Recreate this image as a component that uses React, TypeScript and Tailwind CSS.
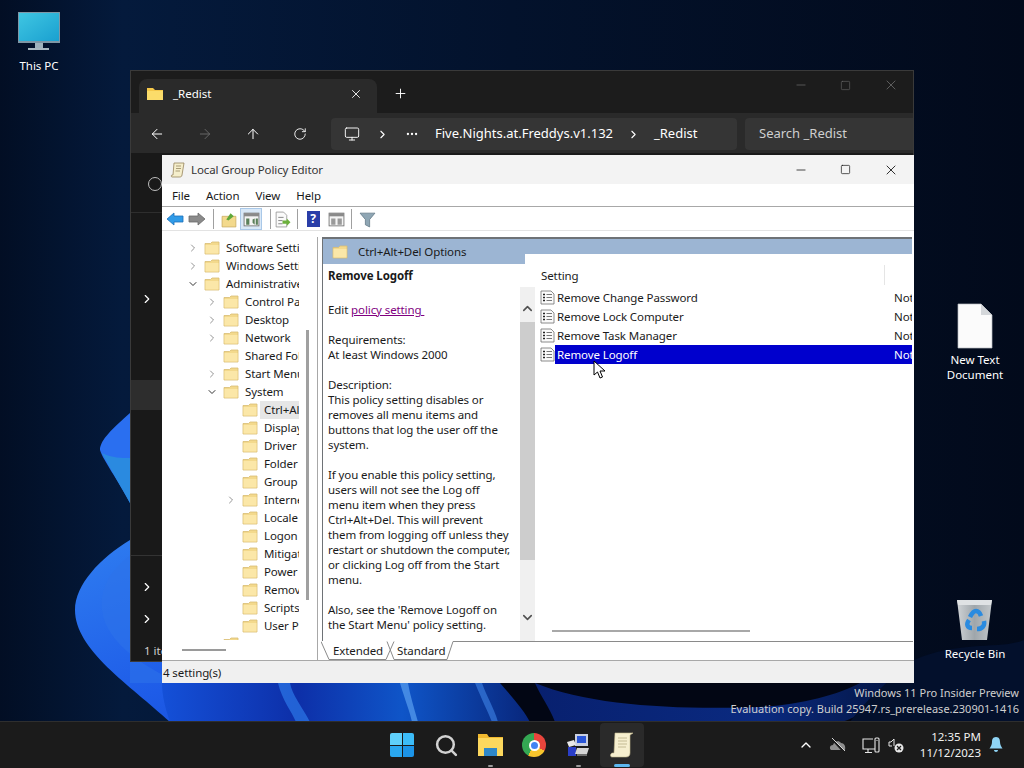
import {
  ArrowLeft,
  ArrowRight,
  ArrowUp,
  ChevronDown,
  ChevronRight,
  ChevronUp,
  Ellipsis,
  Minus,
  Monitor,
  Plus,
  RotateCw,
  Search,
  Square,
  X,
} from "lucide-react";

const font = { fontFamily: '"Noto Sans", "Liberation Sans", sans-serif' };

function Wallpaper() {
  return (
    <svg className="absolute inset-0" width="1024" height="768" viewBox="0 0 1024 768">
      <defs>
        <linearGradient id="bg" x1="0" y1="0" x2="1" y2="0">
          <stop offset="0" stopColor="#020e24" />
          <stop offset="0.12" stopColor="#041a3c" />
          <stop offset="0.5" stopColor="#03122c" />
          <stop offset="1" stopColor="#020a1b" />
        </linearGradient>
        <linearGradient id="petal" x1="0" y1="0" x2="1" y2="1">
          <stop offset="0" stopColor="#2f7df0" />
          <stop offset="0.5" stopColor="#1e5ce8" />
          <stop offset="1" stopColor="#0f3fc4" />
        </linearGradient>
        <linearGradient id="strip" x1="0" y1="0" x2="1" y2="0">
          <stop offset="0" stopColor="#1450d8" />
          <stop offset="0.35" stopColor="#0d2fa8" />
          <stop offset="0.62" stopColor="#0f55c8" />
          <stop offset="1" stopColor="#071f70" />
        </linearGradient>
        <linearGradient id="arc" x1="0" y1="0" x2="1" y2="0">
          <stop offset="0" stopColor="#08206f" />
          <stop offset="0.6" stopColor="#0a2a80" />
          <stop offset="1" stopColor="#03123a" />
        </linearGradient>
      </defs>
      <rect width="1024" height="768" fill="url(#bg)" />
      <path d="M130 413C113 428 100 440 100 450C103 460 118 480 130 503Z" fill="#2a6ff0" />
      <path d="M102 453C112 458 122 458 130 458V503C120 485 108 465 102 453Z" fill="#2a8ae0" />
      <path d="M130 540C100 558 75 585 75 610C75 650 130 685 170 722H560V540Z" fill="url(#petal)" />
      <path d="M130 555C108 572 100 590 102 610C106 645 150 670 180 683H130Z" fill="#2e72ea" opacity="0.55" />
      <path d="M162 683H540C560 700 545 712 530 722H170C165 708 162 695 162 683Z" fill="url(#strip)" />
      <path d="M278 683C282 700 292 712 296 722H310C303 708 292 695 290 683Z" fill="#2c78e8" opacity="0.7" />
      <path d="M400 683C405 700 410 712 412 722H418C414 708 410 695 408 683Z" fill="#5aa0f0" opacity="0.7" />
      <path d="M475 683C482 700 488 712 492 722H498C494 708 486 695 482 683Z" fill="#3f86e8" opacity="0.6" />
      <path d="M500 683C515 700 525 712 530 722H860C880 705 900 695 914 683Z" fill="#020614" />
      <path d="M535 683C590 706 680 710 760 707C800 705 840 694 860 683L914 683C880 702 850 722 840 722H555C550 708 540 695 535 683Z" fill="url(#arc)" />
      <path d="M914 660C960 640 1000 650 1024 640V722H850C870 695 890 680 914 660Z" fill="#03102c" />
    </svg>
  );
}

function MonitorIcon() {
  return (
    <svg width="44" height="40" viewBox="0 0 44 40">
      <defs>
        <linearGradient id="scr" x1="0" y1="0" x2="1" y2="1">
          <stop offset="0" stopColor="#3fc6e2" />
          <stop offset="1" stopColor="#1aa0d0" />
        </linearGradient>
      </defs>
      <rect x="1" y="0" width="42" height="31" fill="#7f97a6" />
      <rect x="2" y="1" width="40" height="28" fill="url(#scr)" />
      <rect x="18" y="31" width="8" height="5" fill="#9fb2bd" />
      <rect x="11" y="36" width="21" height="2" fill="#a9b8c1" />
    </svg>
  );
}

function DocIcon() {
  return (
    <svg width="36" height="46" viewBox="0 0 36 46">
      <path d="M1 1H24L35 12V45H1Z" fill="#fbfbfb" stroke="#b8bcc2" strokeWidth="0.7" />
      <path d="M24 1V12H35Z" fill="#d4d7da" />
    </svg>
  );
}

function BinIcon() {
  return (
    <svg width="38" height="44" viewBox="0 0 38 44">
      <defs>
        <linearGradient id="bin" x1="0" y1="0" x2="1" y2="0">
          <stop offset="0" stopColor="#cfd3d6" />
          <stop offset="0.5" stopColor="#9fa6ab" />
          <stop offset="1" stopColor="#c2c7ca" />
        </linearGradient>
      </defs>
      <path d="M1 2H36L31 42H6Z" fill="url(#bin)" />
      <path d="M1 2H36L35 7H2Z" fill="#dfe2e4" />
      <g fill="none" stroke="#2a8be0" strokeWidth="4.5">
        <path d="M14 19C16 15 18 13 20 13C22 13 24 15 25 18" />
        <path d="M13 22C10 26 11 30 16 30" />
        <path d="M21 31C26 31 29 28 28 23" />
      </g>
    </svg>
  );
}

function DesktopIcon({ className, icon, label, gap }: { className: string; icon: React.ReactNode; label: string; gap: string }) {
  return (
    <div className={`absolute flex flex-col items-center text-center text-[11.5px] leading-[15px] text-white ${className}`}>
      {icon}
      <span className={gap}>{label}</span>
    </div>
  );
}

function Folder({ size = 16 }: { size?: number }) {
  return (
    <svg width={size} height={size} viewBox="0 0 16 16" className="shrink-0">
      <path d="M1 3.5H6.5L8 2H15V14H1Z" fill="#f3d98c" stroke="#d8bd74" strokeWidth="0.8" />
      <path d="M1.5 5H14.5V13.5H1.5Z" fill="#fbe7a8" />
    </svg>
  );
}

function ExplorerWindow() {
  const sidebarArrows = [
    "absolute left-[9px] top-[139px]",
    "absolute left-[9px] top-[427px]",
    "absolute left-[9px] top-[459px]",
  ];
  return (
    <div className="absolute left-[130px] top-[70px] flex h-[592px] w-[784px] flex-col overflow-hidden border border-[#3a3a3a] bg-[#191919] text-white">
      <div className="flex h-[42px] shrink-0 items-end bg-[#1c1c1c] pl-[8px]">
        <div className="flex h-[34px] w-[238px] items-center rounded-t-lg bg-[#2a2a2a] pb-[4px] pl-[7px] text-[11.5px]">
          <svg width="18" height="16" viewBox="0 0 18 16">
            <path d="M1 2H7L9 4H17V14H1Z" fill="#f5c84a" />
            <path d="M1 5H17V14H1Z" fill="#fbdc6a" />
          </svg>
          <span className="ml-[9px]">_Redist</span>
          <X className="ml-auto mr-[14px]" size={14} strokeWidth={1.5} />
        </div>
        <Plus className="mb-[12px] ml-[16px]" size={15} strokeWidth={1.5} />
        <div className="mb-[20px] ml-auto mr-[14px] flex items-center gap-[32px] text-[#6f6f6f]">
          <Minus size={14} strokeWidth={1.2} />
          <Square size={11} strokeWidth={1.2} />
          <X size={16} strokeWidth={1.2} />
        </div>
      </div>
      <div className="flex h-[40px] shrink-0 items-center bg-[#2a2a2a] pl-[18px] pt-[2px] text-[13px]">
        <ArrowLeft size={16} strokeWidth={1.5} />
        <ArrowRight className="ml-[32px] text-[#666666]" size={16} strokeWidth={1.5} />
        <ArrowUp className="ml-[32px]" size={16} strokeWidth={1.5} />
        <RotateCw className="ml-[32px]" size={14} strokeWidth={1.5} />
        <div className="ml-[24px] flex h-[32px] w-[406px] items-center rounded bg-[#353535] pl-[13px]">
          <Monitor size={16} strokeWidth={1.4} />
          <ChevronRight className="ml-[16px]" size={13} />
          <Ellipsis className="ml-[16px]" size={14} />
          <span className="ml-[16px]">Five.Nights.at.Freddys.v1.132</span>
          <ChevronRight className="ml-[14px]" size={13} />
          <span className="ml-[14px]">_Redist</span>
        </div>
        <div className="ml-[8px] flex h-[32px] flex-1 items-center rounded-l bg-[#353535] pl-[14px] text-[#cfcfcf]">
          Search _Redist
        </div>
      </div>
      <div className="relative flex-1">
        <div className="absolute left-[17px] top-[24px] h-[14px] w-[14px] rounded-full border border-[#bdbdbd]" />
        <div className="absolute left-0 top-[59px] h-px w-full bg-[#2e2e2e]" />
        <div className="absolute left-0 top-[227px] h-[30px] w-full bg-[#2d2d2d]" />
        <div className="absolute left-0 top-[402px] h-px w-full bg-[#333333]" />
        {sidebarArrows.map((c) => (
          <ChevronRight key={c} className={c} size={14} strokeWidth={2} />
        ))}
        <span className="absolute left-[13px] top-[489px] text-[11.5px] text-[#d0d0d0]">1 item</span>
      </div>
    </div>
  );
}

function Btn({ children, active }: { children: React.ReactNode; active?: boolean }) {
  return (
    <div className={`flex h-[22px] w-[22px] shrink-0 items-center justify-center ${active ? "border border-[#a9c8e8] bg-[#d9e8f7]" : ""}`}>
      {children}
    </div>
  );
}

function Sep({ className }: { className: string }) {
  return <div className={`h-[20px] w-px bg-[#a0a0a0] ${className}`} />;
}

function GpToolbar() {
  return (
    <div className="flex h-[24px] shrink-0 items-center border-b border-[#e3e3e3] pl-[2px] pt-[1px]">
      <Btn>
        <svg width="18" height="14" viewBox="0 0 18 14">
          <path d="M1 7L8 1V4H17V10H8V13Z" fill="#2f9be8" stroke="#1c6fb8" strokeWidth="0.8" />
        </svg>
      </Btn>
      <Btn>
        <svg width="18" height="14" viewBox="0 0 18 14">
          <path d="M17 7L10 1V4H1V10H10V13Z" fill="#8a8a8a" stroke="#6a6a6a" strokeWidth="0.8" />
        </svg>
      </Btn>
      <Sep className="ml-[5px] mr-[4px]" />
      <Btn>
        <svg width="17" height="17" viewBox="0 0 16 16">
          <path d="M1 5H14V15H1Z" fill="#f3d98c" stroke="#c8a85c" strokeWidth="0.7" />
          <path d="M5 8L9 2L12 5L7 9Z" fill="#5fa83a" />
        </svg>
      </Btn>
      <Btn active>
        <svg width="17" height="15" viewBox="0 0 16 14">
          <rect x="1" y="1" width="14" height="12" fill="#f4f4f4" stroke="#707070" strokeWidth="0.8" />
          <rect x="1" y="1" width="14" height="3" fill="#8a8a8a" />
          <path d="M3 6H6V12H3ZM9 7L11 6V12L9 10ZM12 6H14V12H12Z" fill="#5a7f5a" />
        </svg>
      </Btn>
      <Sep className="ml-[8px]" />
      <Btn>
        <svg width="17" height="17" viewBox="0 0 16 16">
          <path d="M2 1H9L12 4V15H2Z" fill="#fafafa" stroke="#8a8a8a" strokeWidth="0.7" />
          <path d="M4 6H9M4 9H8M4 12H8" stroke="#777777" strokeWidth="0.8" />
          <path d="M8 9H12V7L15.5 10.5L12 14V12H8Z" fill="#6cb03c" />
        </svg>
      </Btn>
      <Sep className="ml-[4px] mr-[4px]" />
      <Btn>
        <div className="flex h-[16px] w-[13px] items-center justify-center bg-[#2a3ea8] text-[12px] font-bold leading-none text-white">?</div>
      </Btn>
      <div className="w-px shrink-0" />
      <Btn>
        <svg width="17" height="15" viewBox="0 0 16 14">
          <rect x="1" y="1" width="14" height="12" fill="#f4f4f4" stroke="#707070" strokeWidth="0.8" />
          <rect x="1" y="1" width="14" height="3" fill="#8a8a8a" />
          <path d="M3 6H7V12H3ZM9 6H13V12H9Z" fill="#9a9a9a" />
        </svg>
      </Btn>
      <Sep className="ml-[4px] mr-[4px]" />
      <Btn>
        <svg width="17" height="17" viewBox="0 0 16 16">
          <path d="M1 2H15L10 8V15L6 13V8Z" fill="#8fa6b4" stroke="#5f7683" strokeWidth="0.7" />
        </svg>
      </Btn>
    </div>
  );
}

const treeRows: { label: string; level: number; arrow?: "right" | "down"; selected?: boolean }[] = [
  { label: "Software Settings", level: 0, arrow: "right" },
  { label: "Windows Settings", level: 0, arrow: "right" },
  { label: "Administrative Templates", level: 0, arrow: "down" },
  { label: "Control Panel", level: 1, arrow: "right" },
  { label: "Desktop", level: 1, arrow: "right" },
  { label: "Network", level: 1, arrow: "right" },
  { label: "Shared Folders", level: 1 },
  { label: "Start Menu and Taskbar", level: 1, arrow: "right" },
  { label: "System", level: 1, arrow: "down" },
  { label: "Ctrl+Alt+Del Options", level: 2, selected: true },
  { label: "Display", level: 2 },
  { label: "Driver Installation", level: 2 },
  { label: "Folder Redirection", level: 2 },
  { label: "Group Policy", level: 2 },
  { label: "Internet Communication", level: 2, arrow: "right" },
  { label: "Locale Services", level: 2 },
  { label: "Logon", level: 2 },
  { label: "Mitigation Options", level: 2 },
  { label: "Power Management", level: 2 },
  { label: "Removable Storage", level: 2 },
  { label: "Scripts", level: 2 },
  { label: "User Profiles", level: 2 },
  { label: "Windows Components", level: 1 },
];

const indent = ["pl-[23px]", "pl-[42px]", "pl-[61px]"];

function Tree() {
  return (
    <div className="relative flex h-[423px] w-[155px] shrink-0 flex-col border-r border-[#a8a8a8]">
      <div className="h-[403px] w-[136px] flex-none overflow-hidden pt-[2px]">
        {treeRows.map((r) => (
          <div key={r.label} className={`flex h-[18px] items-center whitespace-nowrap ${indent[r.level]}`}>
            <span className="flex w-[13px] shrink-0 justify-center text-[#707070]">
              {r.arrow === "right" && <ChevronRight size={12} strokeWidth={1.5} />}
              {r.arrow === "down" && <ChevronDown size={12} strokeWidth={2} className="text-[#333333]" />}
            </span>
            <span className="ml-[5px]"><Folder /></span>
            <span className={`ml-[2px] h-[18px] pl-[4px] leading-[18px] ${r.selected ? "bg-[#e6e6e6]" : ""}`}>{r.label}</span>
          </div>
        ))}
      </div>
      <div className="absolute right-[8px] top-[93px] h-[270px] w-[3px] bg-[#a0a0a0]" />
      <div className="absolute bottom-[9px] left-[19px] h-[2px] w-[44px] bg-[#9a9a9a]" />
    </div>
  );
}

const settings = ["Remove Change Password", "Remove Lock Computer", "Remove Task Manager", "Remove Logoff"];

function SettingIcon() {
  return (
    <svg width="15" height="15" viewBox="0 0 15 15" className="shrink-0">
      <path d="M1 1H11L14 4V14H1Z" fill="#fafafa" stroke="#707070" strokeWidth="0.8" />
      <path d="M3 4.5H5M3 7.5H5M3 10.5H5" stroke="#222222" strokeWidth="1.3" />
      <path d="M6.5 4.5H12M6.5 7.5H12M6.5 10.5H12" stroke="#555555" strokeWidth="0.8" />
    </svg>
  );
}

function Description() {
  return (
    <div className="flex w-[202px] shrink-0 flex-col">
      <div className="flex h-[25px] shrink-0 items-center bg-[#9cb5d3] pl-[9px]">
        <Folder />
        <span className="ml-[10px]">Ctrl+Alt+Del Options</span>
      </div>
      <div className="pl-[5px] pt-[4px] leading-[15px]">
        <p className="font-bold">Remove Logoff</p>
        <p className="mt-[19px]">
          Edit <span className="whitespace-pre text-[#800080] underline">policy setting </span>
        </p>
        <p className="mt-[15px]">Requirements:</p>
        <p>At least Windows 2000</p>
        <p className="mt-[15px]">Description:</p>
        <p>This policy setting disables or</p>
        <p>removes all menu items and</p>
        <p>buttons that log the user off the</p>
        <p>system.</p>
        <p className="mt-[15px]">If you enable this policy setting,</p>
        <p>users will not see the Log off</p>
        <p>menu item when they press</p>
        <p>Ctrl+Alt+Del. This will prevent</p>
        <p>them from logging off unless they</p>
        <p>restart or shutdown the computer,</p>
        <p>or clicking Log off from the Start</p>
        <p>menu.</p>
        <p className="mt-[15px]">Also, see the 'Remove Logoff on</p>
        <p>the Start Menu' policy setting.</p>
      </div>
    </div>
  );
}

function SettingsList() {
  return (
    <div className="flex min-w-0 flex-1 flex-col">
      <div className="h-[15px] shrink-0 bg-[#9cb5d3]" />
      <div className="flex h-[387px] flex-col rounded-tl-[10px] bg-white">
        <div className="relative h-[33px] shrink-0 pl-[16px] pt-[14px] leading-[15px]">
          Setting
          <div className="absolute left-[359px] top-[11px] h-[20px] w-px bg-[#e5e5e5]" />
        </div>
        <div className="flex min-h-0 flex-1">
          <div className="-ml-[5px] flex h-[354px] w-[15px] shrink-0 flex-col items-center bg-[#f0f0f0]">
            <ChevronUp className="mt-[14px] text-[#505050]" size={15} strokeWidth={2.5} />
            <div className="mt-[6px] h-[238px] w-full bg-[#cdcdcd]" />
            <ChevronDown className="mt-[50px] text-[#505050]" size={15} strokeWidth={2.5} />
          </div>
          <div className="relative min-w-0 flex-1 pl-[5px] pt-[1px]">
            {settings.map((s, i) => (
              <div key={s} className="flex h-[19px] items-center whitespace-nowrap">
                <SettingIcon />
                <div className={`flex h-[19px] flex-1 items-center justify-between pl-[2px] ${i === 3 ? "bg-[#0000cd] text-white" : ""}`}>
                  <span>{s}</span>
                  <span className="w-[18px] overflow-hidden">Not configured</span>
                </div>
              </div>
            ))}
            <div className="absolute left-[17px] top-[343px] h-[2px] w-[198px] bg-[#a8a8a8]" />
          </div>
        </div>
      </div>
    </div>
  );
}

function Tabs() {
  return (
    <div className="relative flex h-[19px] items-center pl-[11px] leading-[17px]">
      <svg className="absolute -left-px top-0" width="592" height="19" viewBox="0 0 592 19">
        <path d="M0 0.5L8 18.5H65L73 0.5M66 0.5L73 18.5H126L132 0.5H592" fill="none" stroke="#8a8a8a" />
      </svg>
      <span className="relative">Extended</span>
      <span className="relative ml-[14px]">Standard</span>
    </div>
  );
}

function GpEditor() {
  return (
    <div style={font} className="absolute left-[162px] top-[155px] flex h-[528px] w-[752px] flex-col bg-white text-[11.5px] tracking-[-0.1px] text-[#1a1a1a]">
      <div className="flex h-[29px] shrink-0 items-center bg-[#f3f3f3] pl-[8px]">
        <svg width="16" height="16" viewBox="0 0 16 16">
          <path d="M4 1H14L12 13C12 15 10 15 9 15H2C1 15 1 13 2 13H3Z" fill="#f5eecb" stroke="#96835a" strokeWidth="0.8" />
          <path d="M6 4H11M6 6.5H11M5.5 9H10" stroke="#8a7a55" strokeWidth="0.7" />
        </svg>
        <span className="ml-[5px] text-[#333333]">Local Group Policy Editor</span>
        <div className="ml-auto mr-[15px] flex items-center gap-[32px] text-[#111111]">
          <Minus size={14} strokeWidth={1.3} />
          <Square size={11} strokeWidth={1.5} />
          <X size={16} strokeWidth={1.3} />
        </div>
      </div>
      <div className="flex h-[23px] shrink-0 items-center gap-[16px] border-b border-[#a8a8a8] pl-[10px] pt-[1px]">
        <span>File</span>
        <span>Action</span>
        <span>View</span>
        <span>Help</span>
      </div>
      <GpToolbar />
      <div className="flex h-[6px] shrink-0" />
      <div className="flex min-h-0 flex-1">
        <div className="ml-px flex flex-col">
          <Tree />
        </div>
        <div className="ml-[4px] mr-[2px] flex min-w-0 flex-1 flex-col">
          <div className="flex h-[404px] shrink-0 border-l border-t-2 border-[#6e7276]">
            <Description />
            <SettingsList />
          </div>
          <Tabs />
        </div>
      </div>
      <div className="flex h-[23px] shrink-0 items-center border-t border-[#a8a8a8] bg-[#f0f0f0] pl-[1px] pt-[1px]">
        4 setting(s)
      </div>
    </div>
  );
}

function Taskbar() {
  return (
    <div className="absolute bottom-0 left-0 flex h-[47px] w-[1024px] items-center border-t border-[#2e2e2e] bg-[#1b1b1b] text-white">
      <div className="ml-[380px] flex items-center">
        <div className="flex h-[44px] w-[44px] items-center justify-center">
          <div className="grid h-[24px] w-[24px] grid-cols-2 gap-[1px]">
            <div className="rounded-tl-[2px] bg-[#5fd0fb]" />
            <div className="rounded-tr-[2px] bg-[#3cbcf8]" />
            <div className="rounded-bl-[2px] bg-[#2aa8f0]" />
            <div className="rounded-br-[2px] bg-[#1c94e8]" />
          </div>
        </div>
        <div className="flex h-[44px] w-[44px] items-center justify-center">
          <Search className="text-[#d2d2d2]" size={25} strokeWidth={2.4} />
        </div>
        <div className="relative flex h-[44px] w-[44px] items-center justify-center">
          <svg width="25" height="24" viewBox="0 0 25 24">
            <path d="M0 1H9L11 4H25V22H0Z" fill="#f1b92f" />
            <path d="M0 5H25V23H0Z" fill="#fcd85e" />
            <path d="M6 15H19V23H6Z" fill="#2e87c8" />
          </svg>
          <div className="absolute bottom-0 h-[2px] w-[5px] rounded bg-[#9a9a9a]" />
        </div>
        <div className="flex h-[44px] w-[44px] items-center justify-center">
          <div className="flex h-[24px] w-[24px] items-center justify-center rounded-full bg-[conic-gradient(#e8453c_0_120deg,#f7c52d_120deg_210deg,#34a853_210deg_360deg)]">
            <div className="h-[11px] w-[11px] rounded-full border-2 border-white bg-[#4285f4]" />
          </div>
        </div>
        <div className="relative flex h-[44px] w-[44px] items-center justify-center">
          <svg width="24" height="24" viewBox="0 0 24 24">
            <rect x="9" y="1" width="13" height="12" fill="#c9cfe0" />
            <rect x="11" y="3" width="9" height="7" fill="#2a56d8" />
            <path d="M1 9L8 7L10 12L3 14Z" fill="#e8e8e8" />
            <rect x="2" y="14" width="8" height="9" fill="#2a3ec8" />
            <path d="M11 15H23L21 21H9Z" fill="#d5d5d5" />
            <path d="M11 22H21" stroke="#8a8a8a" strokeWidth="1.5" />
          </svg>
          <div className="absolute bottom-0 h-[2px] w-[5px] rounded bg-[#9a9a9a]" />
        </div>
        <div className="relative flex h-[44px] w-[44px] items-center justify-center rounded bg-[#2a2a2a]">
          <svg width="24" height="26" viewBox="0 0 24 26">
            <path d="M5 1H23L20 3V21C20 24 18 25 16 25H2C0 25 0 22 2 21H4Z" fill="#f6efcf" stroke="#c4b98e" strokeWidth="0.6" />
            <path d="M8 6H17M8 9H17M8 12H17M8 15H16" stroke="#b9ae85" strokeWidth="0.8" />
          </svg>
          <div className="absolute bottom-0 h-[3px] w-[16px] rounded bg-[#5cb8f0]" />
        </div>
      </div>
      <ChevronUp className="ml-[154px]" size={16} strokeWidth={2} />
      <svg className="ml-[15px]" width="18" height="16" viewBox="0 0 18 16">
        <path d="M2 13C0 11 1 8 4 8C5 4 10 3 12 6C15 6 17 9 16 13Z" fill="#8e8e8e" />
        <path d="M3 2L15 15" stroke="#1b1b1b" strokeWidth="2" />
        <path d="M3 1L16 14" stroke="#d5d5d5" strokeWidth="1" />
      </svg>
      <svg className="ml-[15px]" width="18" height="17" viewBox="0 0 18 17" fill="none" stroke="#e6e6e6" strokeWidth="1.1">
        <path d="M11 2H1V12H13" />
        <path d="M6 12V15M3 15.5H10" />
        <rect x="13" y="1" width="4" height="14" rx="1" />
        <path d="M14.5 3.5H15.5" />
      </svg>
      <svg className="ml-[8px]" width="16" height="16" viewBox="0 0 16 16">
        <path d="M1 5H3L6 2V9" fill="none" stroke="#e6e6e6" strokeWidth="1" />
        <path d="M1 5V9H4" fill="none" stroke="#e6e6e6" strokeWidth="1" />
        <circle cx="11" cy="11" r="4.5" fill="#e6e6e6" />
        <path d="M9 9L13 13M13 9L9 13" stroke="#1b1b1b" strokeWidth="1.2" />
      </svg>
      <div className="ml-[5px] w-[72px] whitespace-nowrap text-right text-[11.5px] leading-[16px] text-[#f0f0f0]">
        <div>12:35 PM</div>
        <div>11/12/2023</div>
      </div>
      <svg className="ml-[8px]" width="14" height="16" viewBox="0 0 14 16">
        <path d="M7 0C3.5 0 3 3 3 5C3 8 1.5 10 0.5 11.5H13.5C12.5 10 11 8 11 5C11 3 10.5 0 7 0Z" fill="#8fd4f5" />
        <path d="M5 13H9C9 15.5 5 15.5 5 13Z" fill="#8fd4f5" />
      </svg>
    </div>
  );
}

export default function App() {
  return (
    <div style={font} className="relative h-[768px] w-[1024px] overflow-hidden bg-[#03122c]">
      <Wallpaper />
      <DesktopIcon className="left-[9px] top-[12px] w-[60px]" icon={<MonitorIcon />} label="This PC" gap="mt-[6px]" />
      <DesktopIcon className="left-[940px] top-[303px] w-[70px]" icon={<DocIcon />} label="New Text Document" gap="mt-[3px]" />
      <DesktopIcon className="left-[935px] top-[598px] w-[80px]" icon={<BinIcon />} label="Recycle Bin" gap="mt-[4px]" />
      <ExplorerWindow />
      <GpEditor />
      <div className="absolute right-[5px] top-[685px] whitespace-nowrap text-right text-[11px] leading-[16px] text-[#cfcfcf]">
        <div>Windows 11 Pro Insider Preview</div>
        <div>Evaluation copy. Build 25947.rs_prerelease.230901-1416</div>
      </div>
      <Taskbar />
      <svg className="absolute left-[593px] top-[360px]" width="14" height="20" viewBox="0 0 14 20">
        <path d="M1 1V15L4.5 12L7 18L9.5 17L7 11H12Z" fill="#ffffff" stroke="#000000" strokeWidth="1" />
      </svg>
    </div>
  );
}
